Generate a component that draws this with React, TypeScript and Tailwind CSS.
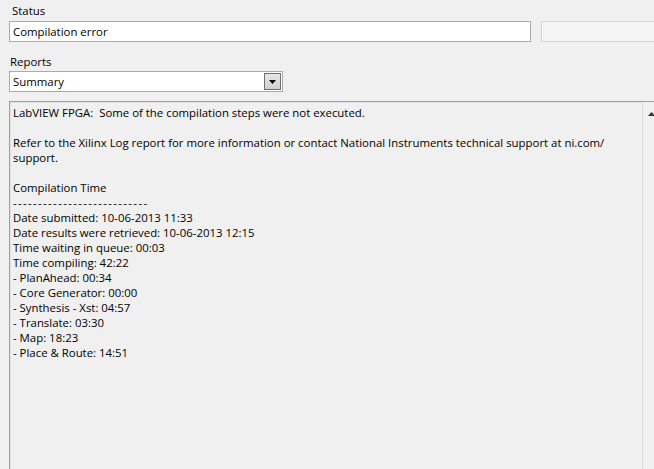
import React from "react";

const font = { fontFamily: '"Open Sans", "Noto Sans", sans-serif' };

export default function App() {
  const lines = [
    "LabVIEW FPGA:  Some of the compilation steps were not executed.",
    "",
    "Refer to the Xilinx Log report for more information or contact National Instruments technical support at ni.com/",
    "support.",
    "",
    "Compilation Time",
    "---------------------------",
    "Date submitted: 10-06-2013 11:33",
    "Date results were retrieved: 10-06-2013 12:15",
    "Time waiting in queue: 00:03",
    "Time compiling: 42:22",
    "- PlanAhead: 00:34",
    "- Core Generator: 00:00",
    "- Synthesis - Xst: 04:57",
    "- Translate: 03:30",
    "- Map: 18:23",
    "- Place & Route: 14:51",
  ];
  return (
    <div
      className="w-[654px] h-[469px] bg-[#f0f0f0] overflow-hidden text-[11.4px] text-black flex flex-col pl-[9px]"
      style={font}
    >
      <div className="mt-[3px] ml-[3px] h-[15px] leading-[15px]">Status</div>
      <div className="mt-[3px] flex gap-[10px] w-[700px]">
        <div className="w-[522px] h-[21px] bg-white border border-[#ababab] pl-[3px] leading-[19px]">
          Compilation error
        </div>
        <div className="w-[140px] h-[21px] bg-[#f5f5f5] border border-[#d5d5d5]" />
      </div>
      <div className="mt-[12px] ml-[1px] h-[15px] leading-[15px]">Reports</div>
      <div className="mt-[2px] w-[274px] h-[21px] bg-white border border-[#ababab] flex items-center pl-[3px] pr-[1px]">
        <span className="flex-1 leading-[19px]">Summary</span>
        <div className="w-[17px] h-[17px] border border-[#707070] bg-gradient-to-b from-[#e6e6e6] to-[#d0d0d0] flex items-center justify-center">
          <svg width="7" height="4" viewBox="0 0 7 4">
            <polygon points="0,0 7,0 3.5,4" fill="#000" />
          </svg>
        </div>
      </div>
      <div className="mt-[9px] w-[650px] flex-1 border-t border-l border-[#a0a0a0] bg-[#f0f0f0] flex shadow-[inset_1px_1px_0_#e3e3e3]">
        <div className="flex-1 pl-[3px] pt-[3px]">
          {lines.map((l, i) => (
            <div
              key={i}
              className={
                l.startsWith("---")
                  ? "h-[15px] leading-[15px] whitespace-pre tracking-[1.35px]"
                  : "h-[15px] leading-[15px] whitespace-pre"
              }
            >
              {l}
            </div>
          ))}
        </div>
        <div className="w-[17px] border-l border-[#dcdcdc] bg-[#f0f0f0] flex flex-col items-center pt-[10px]">
          <svg width="7" height="4" viewBox="0 0 7 4">
            <polygon points="0,4 7,4 3.5,0" fill="#333" />
          </svg>
        </div>
      </div>
    </div>
  );
}
